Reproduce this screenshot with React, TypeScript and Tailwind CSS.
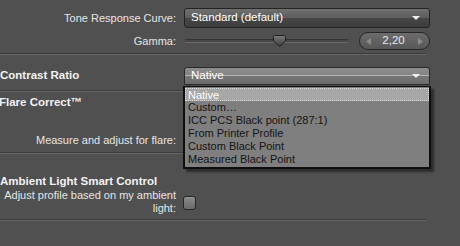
import React from "react";

const Arrow = () => (
  <svg width="8" height="5" viewBox="0 0 8 5" className="absolute right-[9px] top-1/2 -translate-y-1/2">
    <path d="M0 0.5 H8 L4 4.5 Z" fill="#f0f0f0" />
  </svg>
);

const Separator = ({ className = "" }: { className?: string }) => (
  <div className={"w-[426px] h-[2px] border-t border-t-[#3b3b3b] border-b border-b-[#676767] " + className} />
);

export default function App() {
  return (
    <div
      className="relative w-[460px] h-[246px] overflow-hidden bg-[#505050] text-[11px] text-[#e6e6e6]"
      style={{ fontFamily: '"Liberation Sans", Arial, sans-serif' }}
    >
      <div className="flex flex-col pt-[8px]">
        {/* Tone Response Curve */}
        <div className="flex items-center h-[20px]">
          <div className="w-[176px] text-right">Tone Response Curve:</div>
          <div className="ml-[8px] relative w-[246px] h-[20px] rounded-[3px] border border-[#232323] bg-[linear-gradient(to_bottom,#707070_0%,#5e5e5e_48%,#474747_52%,#3c3c3c_100%)] flex items-center pl-[6px] text-white text-[11.5px]">
            Standard (default)
            <Arrow />
          </div>
        </div>
        {/* Gamma */}
        <div className="flex items-center h-[18px] mt-[4px]">
          <div className="w-[176px] text-right">Gamma:</div>
          <div className="ml-[9px] relative w-[163px] h-[18px] flex items-center">
            <div className="w-full h-[4px] border-t border-t-[#333] border-b border-b-[#6a6a6a] bg-[#484848]" />
            <svg width="13" height="12" viewBox="0 0 13 12" className="absolute left-[88px] top-[3px]">
              <defs>
                <linearGradient id="tg" x1="0" y1="0" x2="0" y2="1">
                  <stop offset="0" stopColor="#7a7a7a" />
                  <stop offset="1" stopColor="#3c3c3c" />
                </linearGradient>
              </defs>
              <path d="M0.5 1.5 Q0.5 0.5 1.5 0.5 H11.5 Q12.5 0.5 12.5 1.5 V6 L6.5 11.5 L0.5 6 Z" fill="url(#tg)" stroke="#1f1f1f" />
            </svg>
          </div>
          <div className="ml-[11px] w-[71px] h-[18px] rounded-full border border-[#262626] bg-[linear-gradient(to_bottom,#6c6c6c,#585858)] flex items-center justify-between px-[6px]">
            <svg width="5" height="7" viewBox="0 0 5 7"><path d="M5 0 V7 L0 3.5 Z" fill="#8c8c8c" /></svg>
            <span className="text-[#e4ebf2] text-[11.5px] -ml-[2px]">2,20</span>
            <svg width="5" height="7" viewBox="0 0 5 7"><path d="M0 0 V7 L5 3.5 Z" fill="#8c8c8c" /></svg>
          </div>
        </div>
        <Separator className="mt-[3px]" />

        {/* Contrast Ratio */}
        <div className="flex items-center h-[18px] mt-[12px]">
          <div className="w-[176px] font-bold text-[11.5px] text-[#f2f2f2]">Contrast Ratio</div>
          <div className="ml-[8px] relative w-[246px] h-[18px] rounded-t-[3px] border border-[#2a2a2a] bg-[linear-gradient(to_bottom,#8e8e8e_0%,#848484_45%,#b8b8b8_47%,#767676_52%,#6c6c6c_100%)] flex items-center pl-[6px] text-white text-[11.5px]">
            Native
            <Arrow />
          </div>
        </div>
        <Separator className="mt-[5px]" />

        {/* Flare Correct */}
        <div className="h-[14px] mt-[4px] flex items-center -ml-[1px] font-bold text-[11.5px] text-[#f2f2f2]">Flare Correct™</div>
        <div className="flex items-center h-[14px] mt-[23px]">
          <div className="w-[176px] text-right">Measure and adjust for flare:</div>
        </div>
        <Separator className="mt-[5px]" />

        {/* Ambient Light */}
        <div className="h-[14px] mt-[21px] flex items-center font-bold text-[11.5px] text-[#f2f2f2]">Ambient Light Smart Control</div>
        <div className="flex items-center">
          <div className="w-[176px] text-right leading-[13px]">
            Adjust profile based on my ambient
            <br />
            light:
          </div>
          <div className="ml-[7px] mt-[2px] w-[13px] h-[14px] rounded-[3px] border border-[#262626] bg-[linear-gradient(to_bottom,#8a8a8a,#6a6a6a)] shadow-[inset_0_1px_0_#9a9a9a]" />
        </div>
        <Separator className="mt-[4px]" />
      </div>

      {/* Dropdown list popup */}
      <div className="absolute left-[183px] top-[86px] w-[248px] border-[2px] border-t border-[#0e0e0e] bg-[#7f7f7f] shadow-[3px_3px_2px_rgba(0,0,0,0.45)] pt-[1px] pb-[1px] text-[#141414] text-[11px]">
        <div className="h-[13px] leading-[12px] pl-[2px] bg-[#a7a7a7] text-white border border-dotted border-[#dcdcdc]">Native</div>
        <div className="h-[13px] leading-[13px] pl-[3px]">Custom…</div>
        <div className="h-[13px] leading-[13px] pl-[3px]">ICC PCS Black point (287:1)</div>
        <div className="h-[13px] leading-[13px] pl-[3px]">From Printer Profile</div>
        <div className="h-[13px] leading-[13px] pl-[3px]">Custom Black Point</div>
        <div className="h-[13px] leading-[13px] pl-[3px]">Measured Black Point</div>
      </div>
    </div>
  );
}
